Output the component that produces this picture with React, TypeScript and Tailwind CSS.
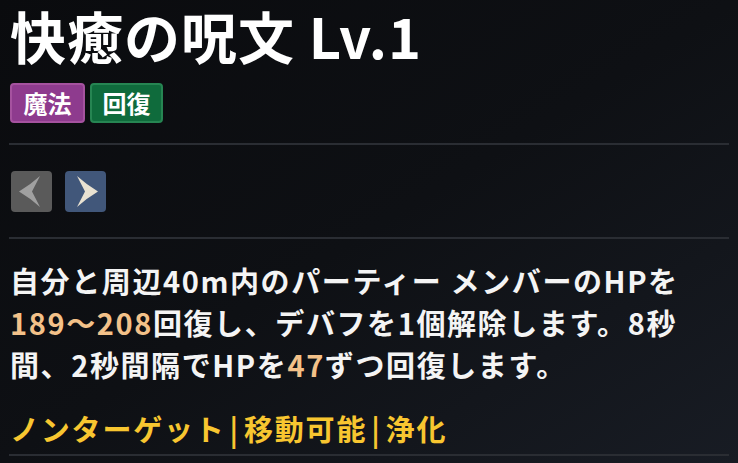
import React from 'react';

const font = { fontFamily: '"Noto Sans CJK JP", "Noto Sans", sans-serif' };

const Divider: React.FC<{ className?: string }> = ({ className = '' }) => (
  <div className={`h-[2px] bg-[#2a2d33] ${className}`} />
);

const ArrowButton: React.FC<{ dir: 'left' | 'right' }> = ({ dir }) => {
  const isLeft = dir === 'left';
  return (
    <button
      className={`w-[41px] h-[41px] rounded-[4px] flex items-center justify-center ${
        isLeft ? 'bg-[#5a5a5a]' : 'bg-[#41577a]'
      }`}
    >
      <svg width="41" height="41" viewBox="0 0 41 41">
        {isLeft ? (
          <path d="M8 20.5 Q19 14 29 5 L21 20.5 L29 36 Q19 27 8 20.5 Z" fill="#a0a0a0" />
        ) : (
          <path d="M33 20.5 Q22 14 12 5 L20 20.5 L12 36 Q22 27 33 20.5 Z" fill="#e9e2d2" />
        )}
      </svg>
    </button>
  );
};

export default function App() {
  return (
    <div
      style={font}
      className="w-[738px] h-[463px] overflow-hidden bg-gradient-to-br from-[#0a0b0e] via-[#0e1014] to-[#181c24] px-[9px] flex flex-col text-white"
    >
      <h1 className="text-[56px] leading-[70px] font-bold pl-[1px] tracking-[1px] whitespace-nowrap">快癒の呪文 Lv.1</h1>

      <div className="mt-[13px] flex gap-[5px] pl-[1px]">
        <span className="h-[40px] w-[75px] flex items-center justify-center rounded-[4px] bg-[#8e3b8e] border-2 border-[#a5529f] text-[24px] font-bold">
          魔法
        </span>
        <span className="h-[40px] w-[73px] flex items-center justify-center rounded-[4px] bg-[#0f6b3c] border-2 border-[#268552] text-[24px] font-bold">
          回復
        </span>
      </div>

      <Divider className="mt-[20px]" />

      <div className="mt-[26px] flex gap-[13px] pl-[2px]">
        <ArrowButton dir="left" />
        <ArrowButton dir="right" />
      </div>

      <Divider className="mt-[25px]" />

      <p className="mt-[20px] text-[29px] leading-[42px] font-bold pl-[1px] tracking-[1.6px] text-[#f4f4f4] whitespace-nowrap">
        自分と周辺40m内のパーティー メンバーのHPを
        <br />
        <span className="text-[#f3c189]">189～208</span>回復し、デバフを1個解除します。8秒
        <br />
        間、2秒間隔でHPを<span className="text-[#f3c189]">47</span>ずつ回復します。
      </p>

      <p className="mt-[22px] text-[29px] leading-[42px] font-bold pl-[1px] tracking-[1.8px] text-[#f8c630] whitespace-nowrap">
        ノンターゲット<span className="mx-[4px]">|</span>移動可能<span className="mx-[4px]">|</span>浄化
      </p>

      <Divider className="mt-[5px]" />
    </div>
  );
}
